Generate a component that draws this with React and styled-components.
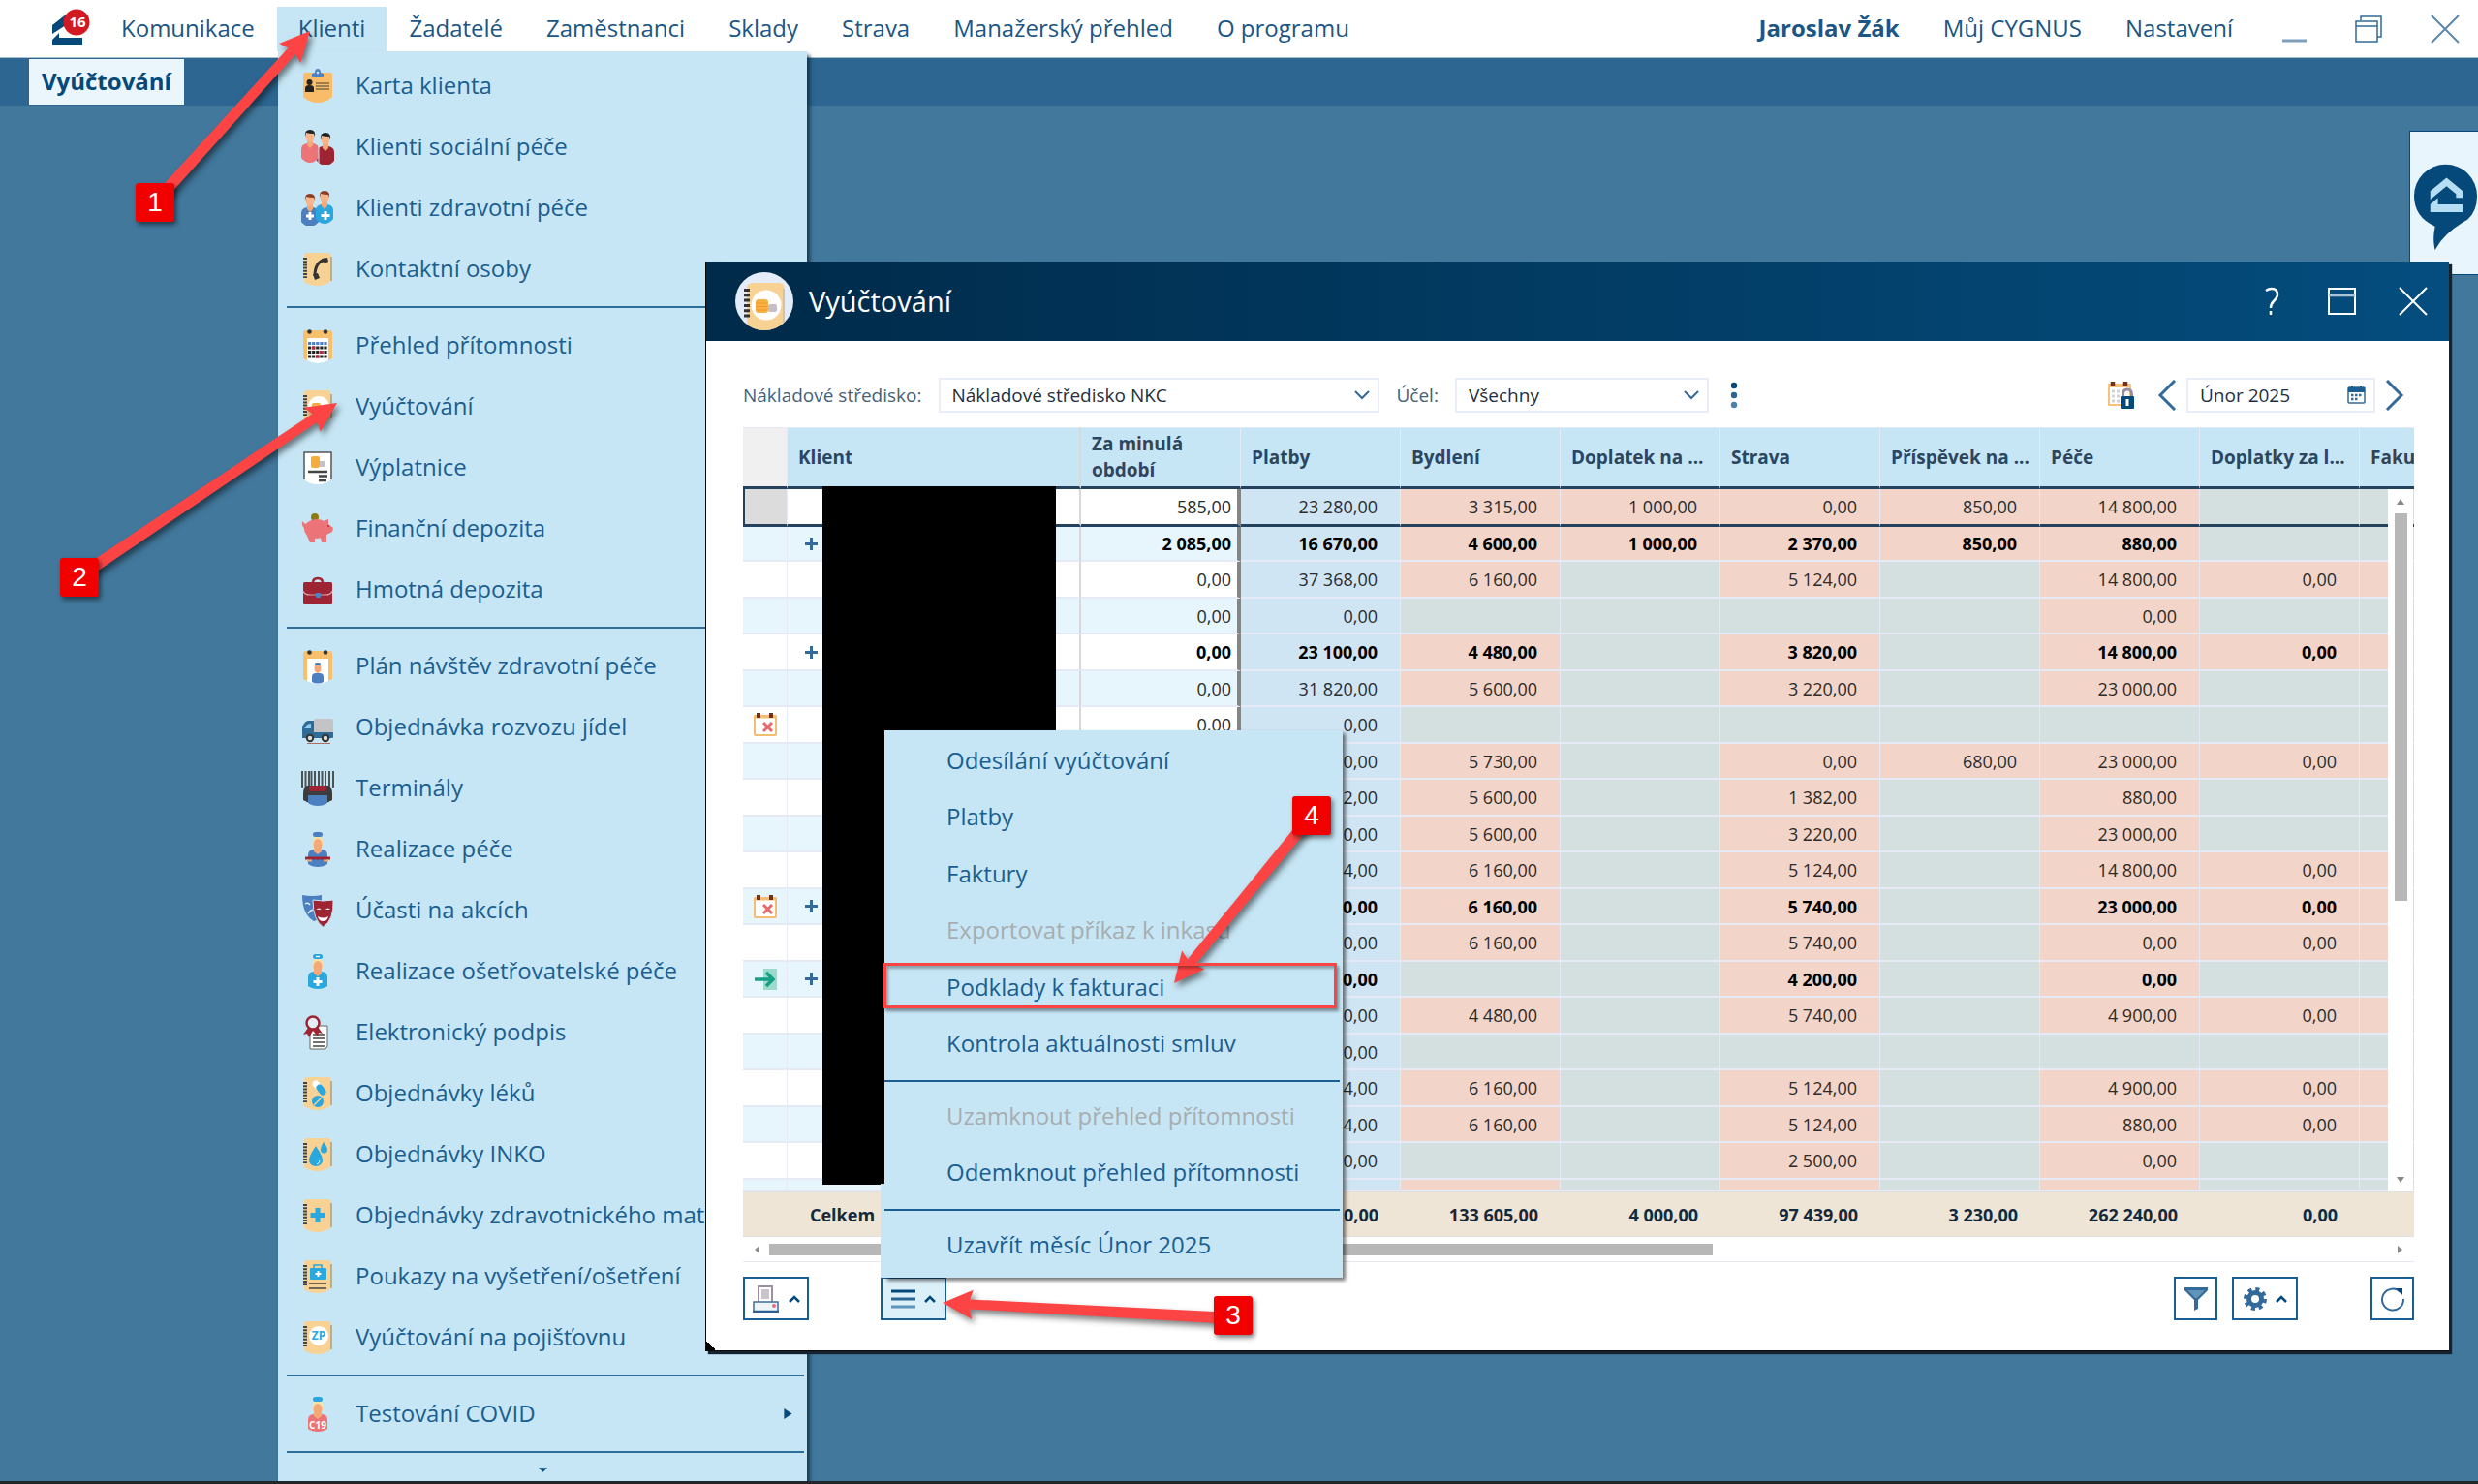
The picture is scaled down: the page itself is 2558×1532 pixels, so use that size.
import React from "react";
import styled, { createGlobalStyle, css } from "styled-components";

const GlobalStyle = createGlobalStyle`
  * {
    box-sizing: border-box;
  }

  body {
    margin: 0;
    font-family: "Open Sans", "Noto Sans", sans-serif;
    font-size: 24px;
    color: #1b5e91;
    background: #42789c;
  }

  button, input, select {
    font-family: inherit;
    font-size: inherit;
    color: inherit;
    margin: 0;
    padding: 0;
  }
`;

//colors that are used all over the app
const blue = "#04497a";
const lightBlue = "#c6e6f5";
const red = "#fd4444";

/* ---------- page ---------- */

const Page = styled.div`
  position: relative;
  min-height: 100vh;
  overflow: hidden;
  display: flex;
  flex-direction: column;
  border-bottom: 3px solid #22262a;
`;

const TopBar = styled.header`
  display: flex;
  align-items: center;
  justify-content: space-between;
  height: 60px;
  padding: 0 19px 0 54px;
  background: #fff;
  border-bottom: 1px solid #a9c0d0;
`;

const TopGroup = styled.nav`
  display: flex;
  align-items: center;
  gap: 1px;
`;

const TopLink = styled.a`
  display: flex;
  align-items: center;
  height: 46px;
  padding: 0 22px 3px;
  color: #1b5685;
  text-decoration: none;
  white-space: nowrap;
  font-weight: ${({ $bold }) => ($bold ? 700 : 400)};
  background: ${({ $active }) => ($active ? lightBlue : "none")};
`;

const Logo = styled.svg`
  width: 48px;
  height: 36px;
  overflow: visible;
`;

const WindowButtons = styled.div`
  display: flex;
  align-items: center;
  gap: ${({ $gap }) => $gap}px;
  margin-left: ${({ $gap }) => $gap - 22}px;
`;

const IconButton = styled.button`
  display: flex;
  align-items: center;
  justify-content: center;
  border: 0;
  background: none;
  color: inherit;
`;

const TabBar = styled.div`
  display: flex;
  height: 49px;
  padding: 1px 30px;
  background: #2c6691;
`;

const Tab = styled.button`
  height: 47px;
  padding: 0 13px 2px;
  border: 0;
  background: #eaf5fc;
  color: ${blue};
  font-weight: 700;
`;

const HelpTab = styled.button`
  position: absolute;
  top: 135px;
  right: 0;
  width: 71px;
  height: 149px;
  padding: 33px 0 0 4px;
  border: 1px solid ${blue};
  border-right: 0;
  background: #e8f5fd;
  display: flex;
  align-items: flex-start;
`;

/* ---------- left menu ---------- */

const Menu = styled.div`
  position: absolute;
  top: 53px;
  left: 287px;
  width: 546px;
  bottom: 0;
  padding-top: 4px;
  background: ${lightBlue};
  box-shadow: 3px 4px 4px rgba(10, 35, 55, 0.75);
`;

const MenuItem = styled.button`
  display: flex;
  align-items: center;
  gap: 21px;
  width: 100%;
  height: 63px;
  padding: 0 14px 0 23px;
  border: 0;
  background: none;
  text-align: left;
  white-space: nowrap;

  span {
    flex: 1;
    padding-bottom: 3px;
  }
`;

const MenuIcon = styled.svg`
  width: 36px;
  height: 36px;
  flex: none;
`;

const MenuLine = styled.hr`
  height: 2px;
  margin: 7px 3px 7px 9px;
  border: 0;
  background: #2f6e99;
`;

const MenuMore = styled.button`
  display: flex;
  justify-content: center;
  width: 100%;
  padding: 6px 4px;
  border: 0;
  background: none;
`;

/* ---------- window ---------- */

const Dialog = styled.section`
  position: absolute;
  z-index: 0;
  top: 270px;
  left: 728px;
  right: 30px;
  background: #fff;
  border-left: 1px solid #0a0a0a;
  border-bottom: 1px solid #0a0a0a;
  box-shadow: 3px 3px 1px #13222e;

  &::after {
    content: "";
    position: absolute;
    left: 0;
    bottom: 0;
    width: 10px;
    height: 10px;
    background: linear-gradient(45deg, #000 50%, transparent 50%);
  }
`;

const DialogHeader = styled.header`
  display: flex;
  align-items: center;
  height: 82px;
  padding: 0 22px 0 30px;
  background: linear-gradient(to right, #002a49, #044d7e);
  color: #fff;
`;

const DialogTitle = styled.h1`
  flex: 1;
  margin: 0 0 2px 16px;
  font-size: 29px;
  font-weight: 400;
`;

const DialogBody = styled.div`
  padding: 38px 36px 31px 38px;
`;

const FilterRow = styled.div`
  display: flex;
  align-items: center;
  height: 35px;
  margin-bottom: 16px;
  font-size: 19px;
`;

const FilterLabel = styled.label`
  margin-right: 17px;
  color: #44617c;
`;

const Field = styled.div`
  display: flex;
  align-items: center;
  width: ${({ $width }) => $width}px;
  height: 36px;
  padding-right: 8px;
  border: 2px solid #e9edf8;
  color: #1d2f42;

  select, input {
    flex: 1;
    min-width: 0;
    height: 100%;
    padding-left: 12px;
    border: 0;
    background: none;
    appearance: none;
    outline: 0;
  }

  svg {
    flex: none;
    pointer-events: none;
  }
`;

const FilterGroup = styled.div`
  display: flex;
  align-items: center;
  margin-right: 18px;
`;

const MonthPicker = styled.div`
  display: flex;
  align-items: center;
  gap: 10px;
  margin: 0 10px 0 24px;
`;

const Spacer = styled.div`
  flex: 1;
`;

const Grid = styled.div`
  position: relative;
  overflow: hidden;
  border-bottom: 1px solid #e3e8f4;
`;

const Table = styled.table`
  width: 1834px;
  table-layout: fixed;
  border-collapse: separate;
  border-spacing: 0;
  font-size: 18px;
  color: #2b2b2b;
`;

const HeadCell = styled.th`
  height: 64px;
  padding: 0 0 0 11px;
  border-top: 1px solid #e6eaf6;
  border-right: ${({ $wide }) => ($wide ? "2px solid #d8d8d8" : "1px solid #e6eaf6")};
  border-bottom: 3px solid #24415e;
  background: ${({ $empty }) => ($empty ? "#f0f0f0" : lightBlue)};
  color: #2c4560;
  font-size: 19px;
  font-weight: 700;
  line-height: 27px;
  text-align: left;
  white-space: nowrap;
`;

const Row = styled.tr`
  height: ${({ $height }) => $height}px;
  font-weight: ${({ $bold }) => ($bold ? 700 : 400)};
  color: ${({ $bold }) => ($bold ? "#000" : "#2b2b2b")};
`;

const Cell = styled.td`
  padding: 0 23px 0 0;
  border-right: 1px solid #e6eaf6;
  border-bottom: 2px solid #e6eaf6;
  background: ${({ $color }) => $color};
  line-height: 24px;
  text-align: right;
  overflow: hidden;
  white-space: nowrap;

  ${({ $selected }) =>
    $selected &&
    css`
      border-bottom: 3px solid #24415e;
    `}
`;

const StateCell = styled(Cell)`
  padding: 0;
  ${({ $selected }) => $selected && "border-left: 2px solid #24415e;"}

  svg {
    display: block;
    margin: 0 auto;
  }
`;

const ClientCell = styled(Cell)`
  padding: 0 0 0 18px;
  border-right: 2px solid #d8d8d8;
  text-align: left;
`;

const Expand = styled.button`
  display: block;
  border: 0;
  background: none;
  line-height: 0;
`;

const PastCell = styled(Cell)`
  padding-right: 6px;
  border-right: 4px solid #858585;
`;

const TotalCell = styled.td`
  height: 47px;
  padding: 0 23px 0 0;
  border-top: 1px solid #dfdfdf;
  border-bottom: 1px solid #dfdfdf;
  background: #eee5d6;
  color: #15293d;
  font-weight: 700;
  text-align: ${({ $left }) => ($left ? "left" : "right")};
  ${({ $left }) => $left && "padding-left: 23px;"}
`;

//client names are hidden
const Hidden = styled.div`
  position: absolute;
  top: 61px;
  left: 82px;
  width: 241px;
  height: 721px;
  background: #000;
`;

const VerticalScroll = styled.div`
  position: absolute;
  top: 64px;
  right: 1px;
  width: 26px;
  height: 725px;
  display: flex;
  flex-direction: column;
  align-items: center;
  justify-content: space-between;
  padding: 9px 0 8px;
  background: #fff;
`;

const VerticalThumb = styled.div`
  width: 13px;
  height: 400px;
  margin: 8px 0 auto;
  background: #b7b7b7;
`;

const HorizontalScroll = styled.div`
  display: flex;
  align-items: center;
  gap: 9px;
  height: 25px;
  padding: 0 10px;
`;

const HorizontalThumb = styled.div`
  width: 974px;
  height: 12px;
  margin-right: auto;
  background: #b7b7b7;
`;

const Footer = styled.footer`
  display: flex;
  height: 45px;
  margin-top: 15px;
`;

const ToolButton = styled.button`
  display: flex;
  align-items: center;
  justify-content: center;
  gap: 9px;
  width: ${({ $wide }) => ($wide ? 68 : 45)}px;
  height: 45px;
  margin-left: ${({ $before = 0 }) => $before}px;
  border: 2px solid #1b5e91;
  background: ${({ $active }) => ($active ? "#dcf0fa" : "#fff")};
`;

const MenuAnchor = styled.div`
  position: relative;
  margin-left: 74px;
`;

const ContextMenu = styled.div`
  position: absolute;
  bottom: 44px;
  left: 4px;
  width: 473px;
  padding: 3px 3px 4px 0;
  background: ${lightBlue};
  box-shadow: 3px 3px 4px rgba(0, 0, 0, 0.55);

  /* lower part of the menu is as wide as its button */
  &::before {
    content: "";
    position: absolute;
    left: -4px;
    bottom: 0;
    width: 4px;
    height: 97px;
    background: ${lightBlue};
  }
`;

const ContextItem = styled.button`
  display: block;
  width: 467px;
  height: ${({ $tall }) => ($tall ? 59 : 58)}px;
  padding: 0 0 4px 64px;
  border: 0;
  background: none;
  text-align: left;
  white-space: nowrap;

  &:disabled {
    color: #a8adb0;
  }
`;

const ContextLine = styled.hr`
  height: 2px;
  margin: 7px 0;
  border: 0;
  background: #1b5e91;
`;

/* ---------- guide marks ---------- */

const Arrows = styled.svg`
  position: absolute;
  top: 0;
  left: 0;
  width: 1500px;
  height: 1500px;
  pointer-events: none;
  filter: drop-shadow(3px 4px 3px rgba(0, 0, 0, 0.5));
`;

const Frame = styled.div`
  position: absolute;
  top: 994px;
  left: 912px;
  width: 468px;
  height: 47px;
  border: 3px solid ${red};
  box-shadow: 2px 3px 3px rgba(0, 0, 0, 0.4), inset 2px 3px 3px rgba(0, 0, 0, 0.3);
  pointer-events: none;
`;

const Step = styled.div`
  position: absolute;
  top: ${({ $y }) => $y - 20}px;
  left: ${({ $x }) => $x - 20}px;
  width: 40px;
  height: 40px;
  border-radius: 3px;
  background: #f20000;
  box-shadow: 2px 3px 5px rgba(0, 0, 0, 0.5);
  color: #fff;
  font: 28px/40px "Liberation Sans", sans-serif;
  text-align: center;
`;

/* ---------- icons of the left menu ---------- */

const Notebook = ({ children }) => (
  <MenuIcon viewBox="0 0 36 36">
    <path d="M7 1h21q4 0 4 4v25q-6 5-14 5T4 31V4q0-3 3-3z" fill="#f8d295" />
    <path d="M32 5v25" stroke="#8d8265" strokeWidth="1" />
    <path d="M5 6v21" stroke="#444" strokeWidth="4" strokeDasharray="2 1.2" />
    {children}
  </MenuIcon>
);

const Calendar = ({ children }) => (
  <MenuIcon viewBox="0 0 36 36">
    <path d="M6 2h24q3 0 3 3v26l-4 2H7l-4-2V5q0-3 3-3z" fill="#f8bf6c" />
    <path d="M7 10h22v23q-5 3-11 3T7 33z" fill="#fff" />
    <circle cx="9.500" cy="3.500" r="2.300" fill="#333" />
    <circle cx="26" cy="3.500" r="2.300" fill="#333" />
    {children}
  </MenuIcon>
);

const Person = ({ x = 0, y = 0, hair, shirt }) => (
  <g transform={`translate(${x} ${y})`}>
    <path d="M0 31v-9q0-5 6-6h6q6 1 6 6v9q-4 5-9 5t-9-5z" fill={shirt} />
    <path d="M6 12h6v6l-3 3-3-3z" fill="#f5a878" />
    <ellipse cx="9" cy="9" rx="4.500" ry="5.500" fill="#f8b48a" />
    <path d="M4 9q-1-7 5-7t5 7l-1-3q-5 0-8-1z" fill={hair} />
  </g>
);

const Nurse = ({ cap, shirt, children }) => (
  <>
    <path d="M8 33V24q0-6 6-6h8q6 0 6 6v9q-4 3-10 3T8 33z" fill={shirt} />
    <path d="M14 15h8v5l-4 3-4-3z" fill="#f5a878" />
    <ellipse cx="18" cy="11" rx="5.500" ry="7" fill="#f7e0a3" />
    <ellipse cx="18" cy="13" rx="4.500" ry="6" fill="#f5a878" />
    <rect x="13" y="0" width="10" height="5" rx="2.500" fill={cap} />
    {children}
  </>
);

const Coins = () => (
  <>
    <circle cx="19" cy="18" r="11" fill="#fff" />
    <rect x="12" y="14" width="9" height="10" rx="2" fill="#f6ad3c" />
    <path d="M13 17h7M13 20h7" stroke="#fbcf86" strokeWidth="1" />
    <rect x="21" y="18" width="5" height="6" rx="1" fill="#b9b4bd" />
  </>
);

const icons = {
  card: (
    <MenuIcon viewBox="0 0 36 36">
      <path d="M5 4h26q2 0 2 2v23q-6 6-15 6T3 29V6q0-2 2-2z" fill="#f9bd69" />
      <path d="M12 8V5l3-1q0-4 3-4t3 4l3 1v3z" fill="#4f81c4" />
      <circle cx="18" cy="4" r="1.300" fill="#c6e6f5" />
      <circle cx="9.500" cy="14" r="3" fill="#222" />
      <path d="M5 24v-4q0-3 4.500-3t4.500 3v4z" fill="#222" />
      <path d="M16 15h14M16 18h14M16 21h14" stroke="#7d6a49" strokeWidth="1.500" />
    </MenuIcon>
  ),
  social: (
    <MenuIcon viewBox="0 0 36 36">
      <Person x={17} y={1} hair="#222" shirt="#9f2433" />
      <Person x={1} y={-2} hair="#222" shirt="#ec7377" />
      <path d="M19 17v17" stroke="#c6e6f5" strokeWidth="1" />
    </MenuIcon>
  ),
  health: (
    <MenuIcon viewBox="0 0 36 36">
      <Person x={1} y={1} hair="#8d3b21" shirt="#4b7fc0" />
      <Person x={16} y={-2} hair="#8d3b21" shirt="#29a7df" />
      <path d="M10 22v8M6 26h8M26 21v9M21.500 25.500h9" stroke="#fff" strokeWidth="3" />
    </MenuIcon>
  ),
  phone: (
    <Notebook>
      <path d="M26 8q-11 2-11 17" fill="none" stroke="#333" strokeWidth="3" />
      <path d="M22 7l6-1 1 4-4 2zM13 23l5-1 2 5-5 2z" fill="#333" />
    </Notebook>
  ),
  calendar: (
    <Calendar>
      <path d="M8 15.500h20" stroke="#4f81c4" strokeWidth="3" strokeDasharray="3.200 0.900" />
      <path d="M8 20h20M8 24.500h20M8 29h20" stroke="#222" strokeWidth="3" strokeDasharray="3.200 0.900" />
      <path d="M12 20h3.200M20 24.500h3.500M16 29h3.500" stroke="#b02c3b" strokeWidth="3" />
    </Calendar>
  ),
  billing: (
    <Notebook>
      <Coins />
    </Notebook>
  ),
  payslip: (
    <MenuIcon viewBox="0 0 36 36">
      <path d="M4 2h28v28q-5 5-14 5T4 30z" fill="#fff" />
      <path d="M4 30V2h28v28" fill="none" stroke="#555" strokeWidth="1.500" />
      <rect x="11" y="6" width="9" height="12" rx="2" fill="#f6ad3c" />
      <rect x="20" y="11" width="5" height="6" fill="#c5c1c8" />
      <path d="M8 22h20M19 26.500h9M19 31h8" stroke="#444" strokeWidth="2.500" />
    </MenuIcon>
  ),
  pig: (
    <MenuIcon viewBox="0 0 36 36">
      <circle cx="15" cy="6" r="4" fill="#8f7a12" />
      <ellipse cx="17" cy="18" rx="13" ry="10" fill="#ec7377" />
      <path d="M24 10l5-2v5l5 4-1 4-6 3v8h-5l-1-5h-6v5h-5l-4-9zM5 18Q1 15 2 10l2 2 3 2z" fill="#ec7377" />
      <circle cx="29" cy="15" r="1" fill="#b02c3b" />
    </MenuIcon>
  ),
  briefcase: (
    <MenuIcon viewBox="0 0 36 36">
      <path d="M13 11q0-5 5-5t5 5" fill="none" stroke="#9f2433" strokeWidth="2.500" />
      <rect x="3" y="10" width="30" height="23" rx="1.500" fill="#9f2433" />
      <path d="M3 19q1 4 7 4h16q6 0 7-4" fill="none" stroke="#d9a3aa" strokeWidth="1.200" />
      <rect x="16" y="21" width="5" height="5" rx="1" fill="#4f81c4" />
    </MenuIcon>
  ),
  visit: (
    <Calendar>
      <path d="M12 34v-5q0-4 4-4h4q4 0 4 4v5q-6 3-12 0z" fill="#4b7fc0" />
      <ellipse cx="18" cy="20" rx="3.500" ry="5" fill="#f5a878" />
      <rect x="15" y="14" width="6" height="3" rx="1.500" fill="#4b7fc0" />
    </Calendar>
  ),
  truck: (
    <MenuIcon viewBox="0 0 36 36">
      <rect x="14" y="9" width="20" height="15" rx="2" fill="#c4c4c7" />
      <path d="M2 29V17q3-6 6-6h6v12h20v5q0 1-1 1z" fill="#2f6b97" />
      <path d="M5 18q2-4 6-4v5H4z" fill="#8ecbf1" />
      <circle cx="10" cy="29" r="3.200" fill="#ddd" stroke="#333" strokeWidth="2" />
      <circle cx="26" cy="29" r="3.200" fill="#ddd" stroke="#333" strokeWidth="2" />
      <path d="M7 34.500h24" stroke="#b36a63" strokeWidth="1" />
    </MenuIcon>
  ),
  terminal: (
    <MenuIcon viewBox="0 0 36 36">
      <path d="M2 0v17M5.500 0v17M9 0v15M11.500 0v15M15 0v15M19 0v15M22.500 0v15M26 0v15M30 0v17M34 0v17" stroke="#4a5558" strokeWidth="2" />
      <path d="M7 15h22q4 2 4 8v7l-6 3H9l-6-3v-7q0-6 4-8z" fill="#3c3c3f" />
      <rect x="9" y="15" width="18" height="6" rx="2" fill="#9f2433" />
      <path d="M8 25h20v8q-4 3-10 3T8 33z" fill="#4b7fc0" />
    </MenuIcon>
  ),
  care: (
    <MenuIcon viewBox="0 0 36 36">
      <Nurse cap="#4b7fc0" shirt="#4b7fc0">
        <path d="M5 27h26" stroke="#9f2433" strokeWidth="3" />
        <path d="M7 29.500h5M24 29.500h5" stroke="#f5a878" strokeWidth="2" />
      </Nurse>
    </MenuIcon>
  ),
  masks: (
    <MenuIcon viewBox="0 0 36 36">
      <path d="M2 2q10 2 20 0v24l-8 3Q2 22 2 2z" fill="#4b7fc0" />
      <path d="M5 11q3-2 5 1M8 21q2-3 5-4" fill="none" stroke="#d8ebf7" strokeWidth="1.500" />
      <path d="M13 7q11 2 21 0 1 21-10.500 28Q13 28 13 7z" fill="#9f2433" stroke="#c6e6f5" strokeWidth="1" />
      <path d="M16.500 17q2.500-3 5 0zM26 17q2.500-3 5 0zM18 24q6 3 11 0-1 5-5.500 5T18 24z" fill="#fff" />
    </MenuIcon>
  ),
  nursing: (
    <MenuIcon viewBox="0 0 36 36">
      <Nurse cap="#29a7df" shirt="#29a7df">
        <path d="M18 24v9M13.500 28.500h9" stroke="#fff" strokeWidth="3" />
        <path d="M16 2.500h4" stroke="#fff" strokeWidth="1.200" />
      </Nurse>
    </MenuIcon>
  ),
  sign: (
    <MenuIcon viewBox="0 0 36 36">
      <path d="M10 11h18v21l-2 3H10z" fill="#fff" stroke="#666" strokeWidth="1" />
      <path d="M13 20h12M13 24h12M13 28h12M13 32h12" stroke="#444" strokeWidth="1.500" />
      <path d="M8 13l-5 7 4-1 2 4 4-7 5 6 1-4 4 1-5-7z" fill="#9f2433" />
      <circle cx="13" cy="8" r="6.500" fill="#e4eef6" stroke="#9f2433" strokeWidth="2.500" />
    </MenuIcon>
  ),
  pills: (
    <Notebook>
      <path d="M16 8l4 4" stroke="#fff" strokeWidth="7" strokeLinecap="round" />
      <path d="M20 12l3 4" stroke="#29a7df" strokeWidth="7" strokeLinecap="round" />
      <circle cx="18" cy="26" r="6" fill="#29a7df" />
      <path d="M14 30l8-8" stroke="#f8d295" strokeWidth="1.500" />
    </Notebook>
  ),
  drops: (
    <Notebook>
      <path d="M16 9q7 10 7 15a7 6 0 0 1-14 0q0-5 7-15zM24 5q4 5 4 8a3.500 3.500 0 0 1-7 0q0-3 3-8z" fill="#29a7df" />
      <path d="M20 24q0 3-3 4" fill="none" stroke="#fff" strokeWidth="1" />
    </Notebook>
  ),
  plus: (
    <Notebook>
      <path d="M18 10v15M10.500 17.500h15" stroke="#29a7df" strokeWidth="5" />
    </Notebook>
  ),
  kit: (
    <Notebook>
      <path d="M14 9V6h8v3" fill="none" stroke="#29a7df" strokeWidth="1.500" />
      <rect x="10" y="9" width="17" height="12" rx="1" fill="#29a7df" />
      <path d="M18.500 12v6M15.500 15h6" stroke="#fff" strokeWidth="2" />
      <path d="M9 25h18M9 30h18" stroke="#444" strokeWidth="1.500" />
    </Notebook>
  ),
  zp: (
    <Notebook>
      <circle cx="19" cy="16" r="10" fill="#fff" />
      <text x="19" y="20" textAnchor="middle" fontSize="12" fontWeight="700" fill="#29a7df">ZP</text>
    </Notebook>
  ),
  covid: (
    <MenuIcon viewBox="0 0 36 36">
      <Nurse cap="#29a7df" shirt="#ec7377">
        <text x="18" y="33" textAnchor="middle" fontSize="10" fontWeight="700" fill="#fff">C19</text>
      </Nurse>
    </MenuIcon>
  ),
};

/* ---------- small icons ---------- */

const CloseIcon = ({ color }) => (
  <svg width="30" height="30" viewBox="0 0 30 30" stroke={color} strokeWidth="2">
    <path d="M1 1l28 28M29 1L1 29" />
  </svg>
);

const CaretUp = () => (
  <svg width="12" height="8" viewBox="0 0 12 8" fill="none" stroke={blue} strokeWidth="2.500">
    <path d="M1 7l5-5 5 5" />
  </svg>
);

const CaretDown = () => (
  <svg width="16" height="10" viewBox="0 0 16 10" fill="none" stroke="#336a9a" strokeWidth="2">
    <path d="M1 1l7 7 7-7" />
  </svg>
);

const Chevron = ({ d }) => (
  <svg width="20" height="32" viewBox="0 0 20 32" fill="none" stroke="#336a9a" strokeWidth="3">
    <path d={d} />
  </svg>
);

const Triangle = ({ points, color = "#8a8a8a", size = 8 }) => (
  <svg width={size} height={size} viewBox="0 0 8 8">
    <polygon points={points} fill={color} />
  </svg>
);

const CalendarX = () => (
  <svg width="26" height="26" viewBox="0 0 26 26">
    <rect x="2" y="4" width="22" height="20" rx="1" fill="#fff" stroke="#f5bd72" strokeWidth="2" />
    <path d="M1 5h24" stroke="#f5bd72" strokeWidth="3" />
    <path d="M6 1v5M19 1v5" stroke="#703019" strokeWidth="4" />
    <path d="M11 11l9 9M20 11l-9 9" stroke="#e96a6c" strokeWidth="3" />
  </svg>
);

const ArrowIn = () => (
  <svg width="24" height="22" viewBox="0 0 24 22">
    <rect x="10" y="0" width="14" height="22" fill="#9bdacc" />
    <path d="M1 11h18M13 4l7 7-7 7" fill="none" stroke="#16a085" strokeWidth="3.500" />
  </svg>
);

/* ---------- data ---------- */

const topMenu = ["Komunikace", "Klienti", "Žadatelé", "Zaměstnanci", "Sklady", "Strava", "Manažerský přehled", "O programu"];

const menuGroups = [
  [
    ["card", "Karta klienta"],
    ["social", "Klienti sociální péče"],
    ["health", "Klienti zdravotní péče"],
    ["phone", "Kontaktní osoby"],
  ],
  [
    ["calendar", "Přehled přítomnosti"],
    ["billing", "Vyúčtování"],
    ["payslip", "Výplatnice"],
    ["pig", "Finanční depozita"],
    ["briefcase", "Hmotná depozita"],
  ],
  [
    ["visit", "Plán návštěv zdravotní péče"],
    ["truck", "Objednávka rozvozu jídel"],
    ["terminal", "Terminály"],
    ["care", "Realizace péče"],
    ["masks", "Účasti na akcích"],
    ["nursing", "Realizace ošetřovatelské péče"],
    ["sign", "Elektronický podpis"],
    ["pills", "Objednávky léků"],
    ["drops", "Objednávky INKO"],
    ["plus", "Objednávky zdravotnického mat"],
    ["kit", "Poukazy na vyšetření/ošetření"],
    ["zp", "Vyúčtování na pojišťovnu"],
  ],
  [["covid", "Testování COVID"]],
];

const columns = ["Platby", "Bydlení", "Doplatek na ...", "Strava", "Příspěvek na ...", "Péče", "Doplatky za l...", "Faku"];

//past = Za minulá období, values = Platby ... Doplatky za l...
const rows = [
  { past: "585,00", values: ["23 280,00", "3 315,00", "1 000,00", "0,00", "850,00", "14 800,00", ""], selected: true },
  { past: "2 085,00", values: ["16 670,00", "4 600,00", "1 000,00", "2 370,00", "850,00", "880,00", ""], group: true },
  { past: "0,00", values: ["37 368,00", "6 160,00", "", "5 124,00", "", "14 800,00", "0,00"] },
  { past: "0,00", values: ["0,00", "", "", "", "", "0,00", ""] },
  { past: "0,00", values: ["23 100,00", "4 480,00", "", "3 820,00", "", "14 800,00", "0,00"], group: true },
  { past: "0,00", values: ["31 820,00", "5 600,00", "", "3 220,00", "", "23 000,00", ""] },
  { past: "0,00", values: ["0,00", "", "", "", "", "", ""], state: "x" },
  { values: ["0,00", "5 730,00", "", "0,00", "680,00", "23 000,00", "0,00"] },
  { values: ["2,00", "5 600,00", "", "1 382,00", "", "880,00", ""] },
  { values: ["0,00", "5 600,00", "", "3 220,00", "", "23 000,00", ""] },
  { values: ["4,00", "6 160,00", "", "5 124,00", "", "14 800,00", "0,00"] },
  { values: ["0,00", "6 160,00", "", "5 740,00", "", "23 000,00", "0,00"], group: true, state: "x" },
  { values: ["0,00", "6 160,00", "", "5 740,00", "", "0,00", "0,00"] },
  { values: ["0,00", "", "", "4 200,00", "", "0,00", ""], group: true, state: "in" },
  { values: ["0,00", "4 480,00", "", "5 740,00", "", "4 900,00", "0,00"] },
  { values: ["0,00", "", "", "", "", "", ""] },
  { values: ["4,00", "6 160,00", "", "5 124,00", "", "4 900,00", "0,00"] },
  { values: ["4,00", "6 160,00", "", "5 124,00", "", "880,00", "0,00"] },
  { values: ["0,00", "", "", "2 500,00", "", "0,00", ""] },
];

const totals = ["0,00", "133 605,00", "4 000,00", "97 439,00", "3 230,00", "262 240,00", "0,00", ""];

//arrows of the guide: from the step number to the tip
const arrows = [
  [160, 209, 320, 32],
  [82, 595, 348, 416],
  [1273, 1361, 973, 1345],
  [1354, 842, 1212, 1015],
];

const steps = [
  [160, 209],
  [82, 596],
  [1273, 1358],
  [1354, 842],
];

const arrowPath = ([x1, y1, x2, y2]) => {
  const length = Math.hypot(x2 - x1, y2 - y1);
  const ux = (x2 - x1) / length;
  const uy = (y2 - y1) / length;
  const point = (along, side) => `${x1 + ux * along - uy * side} ${y1 + uy * along + ux * side}`;
  return `M${point(0, 6)} L${point(length - 28, 5)} L${point(length - 31, 15)} L${point(length, 0)} L${point(length - 31, -15)} L${point(length - 28, -5)} L${point(0, -6)} Z`;
};

//empty cells are green, filled cells are orange
const cellColor = (value) => (value ? "#f2d5c8" : "#d4e0df");

const rowHeight = (index) => {
  if (index === 0) return 39;
  if (index === 1) return 36;
  return index % 2 === 0 ? 38 : 37;
};

const DataRow = ({ row, index }) => {
  const stripe = index % 2 === 0 ? "#fff" : "#e7f5fc";
  const selected = row.selected;

  return (
    <Row $height={rowHeight(index)} $bold={row.group}>
      <StateCell $color={selected ? "#dcdcdc" : stripe} $selected={selected}>
        {row.state === "x" && <CalendarX />}
        {row.state === "in" && <ArrowIn />}
      </StateCell>
      <ClientCell $color={stripe} $selected={selected}>
        {row.group && (
          <Expand aria-label="Rozbalit">
            <svg width="13" height="13" viewBox="0 0 13 13" stroke="#336a9a" strokeWidth="3">
              <path d="M6.500 0v13M0 6.500h13" />
            </svg>
          </Expand>
        )}
      </ClientCell>
      <PastCell $color={stripe} $selected={selected}>{row.past}</PastCell>
      {row.values.map((value, i) => (
        <Cell key={i} $color={i === 0 ? "#cfe5f4" : cellColor(value)} $selected={selected}>
          {value}
        </Cell>
      ))}
      <Cell $color={cellColor(row.values[6])} $selected={selected} />
    </Row>
  );
};

const Column = styled.col`
  width: ${({ $width }) => $width}px;
`;

const DataGrid = () => (
  <Grid>
    <Table>
      <colgroup>
        <Column $width={46} />
        <Column $width={303} />
        {[...Array(9)].map((_, i) => (
          <Column key={i} $width={165} />
        ))}
      </colgroup>
      <thead>
        <tr>
          <HeadCell $empty />
          <HeadCell $wide>Klient</HeadCell>
          <HeadCell>
            Za minulá
            <br />
            období
          </HeadCell>
          {columns.map((column) => (
            <HeadCell key={column}>{column}</HeadCell>
          ))}
        </tr>
      </thead>
      <tbody>
        {rows.map((row, index) => (
          <DataRow key={index} row={row} index={index} />
        ))}
        {/*top of the next row, the rest is scrolled away*/}
        <Row $height={12}>
          <StateCell $color="#e7f5fc" />
          <ClientCell $color="#e7f5fc" />
          <PastCell $color="#e7f5fc" />
          <Cell $color="#cfe5f4" />
          {[1, 0, 1, 0, 1, 0, 0].map((filled, i) => (
            <Cell key={i} $color={cellColor(filled)} />
          ))}
        </Row>
      </tbody>
      <tfoot>
        <tr>
          <TotalCell />
          <TotalCell $left>Celkem</TotalCell>
          <TotalCell />
          {totals.map((total, i) => (
            <TotalCell key={i}>{total}</TotalCell>
          ))}
        </tr>
      </tfoot>
    </Table>
    <Hidden />
    <VerticalScroll>
      <Triangle points="4,1 8,7 0,7" />
      <VerticalThumb />
      <Triangle points="0,1 8,1 4,7" />
    </VerticalScroll>
    <HorizontalScroll>
      <Triangle points="7,0 7,8 2,4" />
      <HorizontalThumb />
      <Triangle points="1,0 1,8 6,4" />
    </HorizontalScroll>
  </Grid>
);

const MainMenu = () => (
  <Menu>
    {menuGroups.map((group, index) => (
      <React.Fragment key={index}>
        {group.map(([icon, label]) => (
          <MenuItem key={label}>
            {icons[icon]}
            <span>{label}</span>
            {icon === "covid" && <Triangle points="1,0 7,4 1,8" color={blue} size={11} />}
          </MenuItem>
        ))}
        <MenuLine />
      </React.Fragment>
    ))}
    <MenuMore aria-label="Další">
      <Triangle points="0,2 8,2 4,6" color={blue} size={9} />
    </MenuMore>
  </Menu>
);

const ActionMenu = () => (
  <ContextMenu>
    <ContextItem>Odesílání vyúčtování</ContextItem>
    <ContextItem $tall>Platby</ContextItem>
    <ContextItem>Faktury</ContextItem>
    <ContextItem $tall disabled>Exportovat příkaz k inkasu</ContextItem>
    <ContextItem>Podklady k fakturaci</ContextItem>
    <ContextItem $tall>Kontrola aktuálnosti smluv</ContextItem>
    <ContextLine />
    <ContextItem disabled>Uzamknout přehled přítomnosti</ContextItem>
    <ContextItem $tall>Odemknout přehled přítomnosti</ContextItem>
    <ContextLine />
    <ContextItem>Uzavřít měsíc Únor 2025</ContextItem>
  </ContextMenu>
);

const Filters = () => (
  <FilterRow>
    <FilterGroup>
      <FilterLabel htmlFor="center">Nákladové středisko:</FilterLabel>
      <Field $width={455}>
        <select id="center">
          <option>Nákladové středisko NKC</option>
        </select>
        <CaretDown />
      </Field>
    </FilterGroup>
    <FilterGroup>
      <FilterLabel htmlFor="purpose">Účel:</FilterLabel>
      <Field $width={262}>
        <select id="purpose">
          <option>Všechny</option>
        </select>
        <CaretDown />
      </Field>
    </FilterGroup>
    <IconButton aria-label="Více">
      <svg width="16" height="28" viewBox="0 0 16 28">
        <circle cx="8" cy="4" r="3.200" fill="#04497a" />
        <circle cx="8" cy="14" r="3.200" fill="#2a668f" />
        <circle cx="8" cy="24" r="3.200" fill="#4d83aa" />
      </svg>
    </IconButton>
    <Spacer />
    <IconButton aria-label="Uzamčení přehledu">
      <svg width="28" height="28" viewBox="0 0 28 28">
        <path d="M2 4h22v20H2z" fill="#fff" stroke="#f9c27c" strokeWidth="2" />
        <path d="M1 4h24" stroke="#f9c27c" strokeWidth="4" />
        <path d="M6 0v5M19 0v5" stroke="#703019" strokeWidth="4.500" />
        <path d="M5 10h12M5 15h10M5 20h9" stroke="#d3d3d3" strokeWidth="3" strokeDasharray="3 2" />
        <path d="M16.500 17v-4q0-5 4.500-5t4.500 5v4" fill="none" stroke="#9a8d9d" strokeWidth="3" />
        <rect x="14" y="15" width="14" height="13" rx="1" fill="#04497a" />
        <path d="M21 18v7" stroke="#fff" strokeWidth="3" />
      </svg>
    </IconButton>
    <MonthPicker>
      <IconButton aria-label="Předchozí měsíc">
        <Chevron d="M18 1L3 16l15 15" />
      </IconButton>
      <Field $width={195}>
        <input id="month" aria-label="Měsíc" defaultValue="Únor 2025" />
        <svg width="19" height="19" viewBox="0 0 19 19">
          <rect x="1" y="2" width="17" height="16" rx="1" fill="#fff" stroke="#336a9a" strokeWidth="1.500" />
          <rect x="1" y="2" width="17" height="5" fill="#1b5e91" />
          <path d="M5 0v3M14 0v3" stroke="#1b5e91" strokeWidth="2" />
          <path d="M4 10h11M4 14h8" stroke="#336a9a" strokeWidth="2.500" strokeDasharray="2.500 1.500" />
        </svg>
      </Field>
      <IconButton aria-label="Další měsíc">
        <Chevron d="M2 1l15 15L2 31" />
      </IconButton>
    </MonthPicker>
  </FilterRow>
);

const BillingWindow = () => (
  <Dialog>
    <DialogHeader>
      <svg width="60" height="60" viewBox="0 0 60 60">
        <clipPath id="round">
          <circle cx="30" cy="30" r="30" />
        </clipPath>
        <g clipPath="url(#round)">
          <path d="M0 0h60v60H0z" fill="#e3ecf8" />
          <path d="M18 11h27q6 0 6 7v42H12V17q0-6 6-6z" fill="#f8d295" />
          <path d="M50 17v36" stroke="#d8c29a" strokeWidth="2" />
        </g>
        <path d="M12 17v30" stroke="#333" strokeWidth="6" strokeDasharray="3 2.300" />
        <circle cx="32" cy="34" r="15.500" fill="#fff" />
        <rect x="34" y="33" width="9" height="8" rx="2" fill="#c5bec9" />
        <rect x="21" y="28" width="13" height="14" rx="3" fill="#f8b047" />
        <path d="M21 32h12M21 35.500h12M21 39h12" stroke="#ef9a1d" strokeWidth="1" />
      </svg>
      <DialogTitle>Vyúčtování</DialogTitle>
      <WindowButtons $gap={43}>
        <IconButton aria-label="Nápověda">
          <svg width="30" height="30" viewBox="0 0 30 30" fill="none" stroke="#fff" strokeWidth="2.500">
            <path d="M9 4q3-2 6-2 6 0 6 6 0 3-4 7-3 3-3 7M14 25v4" />
          </svg>
        </IconButton>
        <IconButton aria-label="Maximalizovat">
          <svg width="30" height="28" viewBox="0 0 30 28" fill="none" stroke="#fff" strokeWidth="2">
            <path d="M1 1h27v26H1z" />
            <path d="M1 8h27" stroke="#a9c4d9" strokeWidth="2.500" />
          </svg>
        </IconButton>
        <IconButton aria-label="Zavřít">
          <CloseIcon color="#fff" />
        </IconButton>
      </WindowButtons>
    </DialogHeader>

    <DialogBody>
      <Filters />
      <DataGrid />
      <Footer>
        <ToolButton $wide aria-label="Tisk">
          <svg width="28" height="28" viewBox="0 0 28 28">
            <rect x="6" y="1" width="14" height="17" fill="#fff" stroke="#9a8fa3" strokeWidth="2" />
            <rect x="9" y="4" width="8" height="10" fill="#c9c3ce" />
            <rect x="1" y="17" width="25" height="10" fill="#eef3f8" stroke="#3c6e9e" strokeWidth="1.500" />
            <path d="M0 27h27" stroke="#2c5f93" strokeWidth="2.500" />
            <circle cx="22" cy="21" r="2" fill="#ea6b77" />
          </svg>
          <CaretUp />
        </ToolButton>
        <MenuAnchor>
          <ToolButton $wide $active aria-label="Akce">
            <svg width="25" height="20" viewBox="0 0 25 20" strokeWidth="3">
              <path d="M0 2h25" stroke="#04497a" />
              <path d="M0 10h25" stroke="#2a668f" />
              <path d="M0 18h25" stroke="#5f93b8" />
            </svg>
            <CaretUp />
          </ToolButton>
          <ActionMenu />
        </MenuAnchor>
        <Spacer />
        <ToolButton aria-label="Filtr">
          <svg width="24" height="24" viewBox="0 0 24 24">
            <path d="M0 0h24v3L14 13v9l-4 2V13L0 3z" fill="#336a9a" />
            <path d="M3 3h18l-8 8h-2z" fill="#5f93b8" />
          </svg>
        </ToolButton>
        <ToolButton $wide $before={15} aria-label="Nastavení">
          <svg width="24" height="24" viewBox="0 0 24 24" fill="none" stroke="#336a9a">
            <circle cx="12" cy="12" r="6.500" strokeWidth="5" />
            <circle cx="12" cy="12" r="10" strokeWidth="4" strokeDasharray="4 3.854" />
          </svg>
          <CaretUp />
        </ToolButton>
        <ToolButton $before={75} aria-label="Obnovit">
          <svg width="26" height="26" viewBox="0 0 26 26" fill="none" stroke="#336a9a" strokeWidth="2">
            <path d="M21 6a11 11 0 1 0 3 7" />
            <path d="M16 2h7v7z" fill="#04497a" stroke="none" />
          </svg>
        </ToolButton>
      </Footer>
    </DialogBody>
  </Dialog>
);

const App = () => {
  return (
    <Page>
      <GlobalStyle />
      <TopBar>
        <TopGroup>
          <Logo viewBox="0 0 48 36">
            <path d="M0 14L14 3v11L0 23zM0 34v-5l7-7v5h24v7z" fill={blue} />
            <circle cx="25" cy="11" r="13.500" fill="#d01920" />
            <text x="26" y="16" textAnchor="middle" fontSize="15" fontWeight="700" fill="#fff">16</text>
          </Logo>
          {topMenu.map((item) => (
            <TopLink key={item} href="#" $active={item === "Klienti"}>
              {item}
            </TopLink>
          ))}
        </TopGroup>
        <TopGroup>
          <TopLink href="#" $bold>Jaroslav Žák</TopLink>
          <TopLink href="#">Můj CYGNUS</TopLink>
          <TopLink href="#">Nastavení</TopLink>
          <WindowButtons $gap={50}>
            <IconButton aria-label="Minimalizovat">
              <svg width="25" height="28" viewBox="0 0 25 28">
                <path d="M0 26h25" stroke="#7f9fbd" strokeWidth="3" />
              </svg>
            </IconButton>
            <IconButton aria-label="Obnovit velikost">
              <svg width="28" height="28" viewBox="0 0 28 28" fill="none" stroke="#336a9a" strokeWidth="1.500">
                <path d="M6 5V1h21v21h-4" />
                <path d="M1 6h22v21H1zM1 11h22" />
              </svg>
            </IconButton>
            <IconButton aria-label="Zavřít">
              <CloseIcon color="#5e87ac" />
            </IconButton>
          </WindowButtons>
        </TopGroup>
      </TopBar>
      <TabBar>
        <Tab>Vyúčtování</Tab>
      </TabBar>

      <HelpTab aria-label="Podpora">
        <svg width="67" height="90" viewBox="0 0 67 90">
          <path d="M33 0a33 33 0 0 1 33 33q0 16-10 25Q31 72 22 90q-3-12 0-25Q0 55 0 33A33 33 0 0 1 33 0z" fill={blue} />
          <path d="M17 28L34 14l17 14v7h-7v-4L34 23 17 37z" fill="#b5ddf3" />
          <path d="M17 50v-8l8-7v7h26v8z" fill="#b5ddf3" />
        </svg>
      </HelpTab>

      <MainMenu />
      <BillingWindow />

      <Arrows viewBox="0 0 1500 1500">
        {arrows.map((arrow, index) => (
          <path key={index} d={arrowPath(arrow)} fill={red} />
        ))}
      </Arrows>
      <Frame />
      {steps.map(([x, y], index) => (
        <Step key={index} $x={x} $y={y}>
          {index + 1}
        </Step>
      ))}
    </Page>
  );
};

export default App;
